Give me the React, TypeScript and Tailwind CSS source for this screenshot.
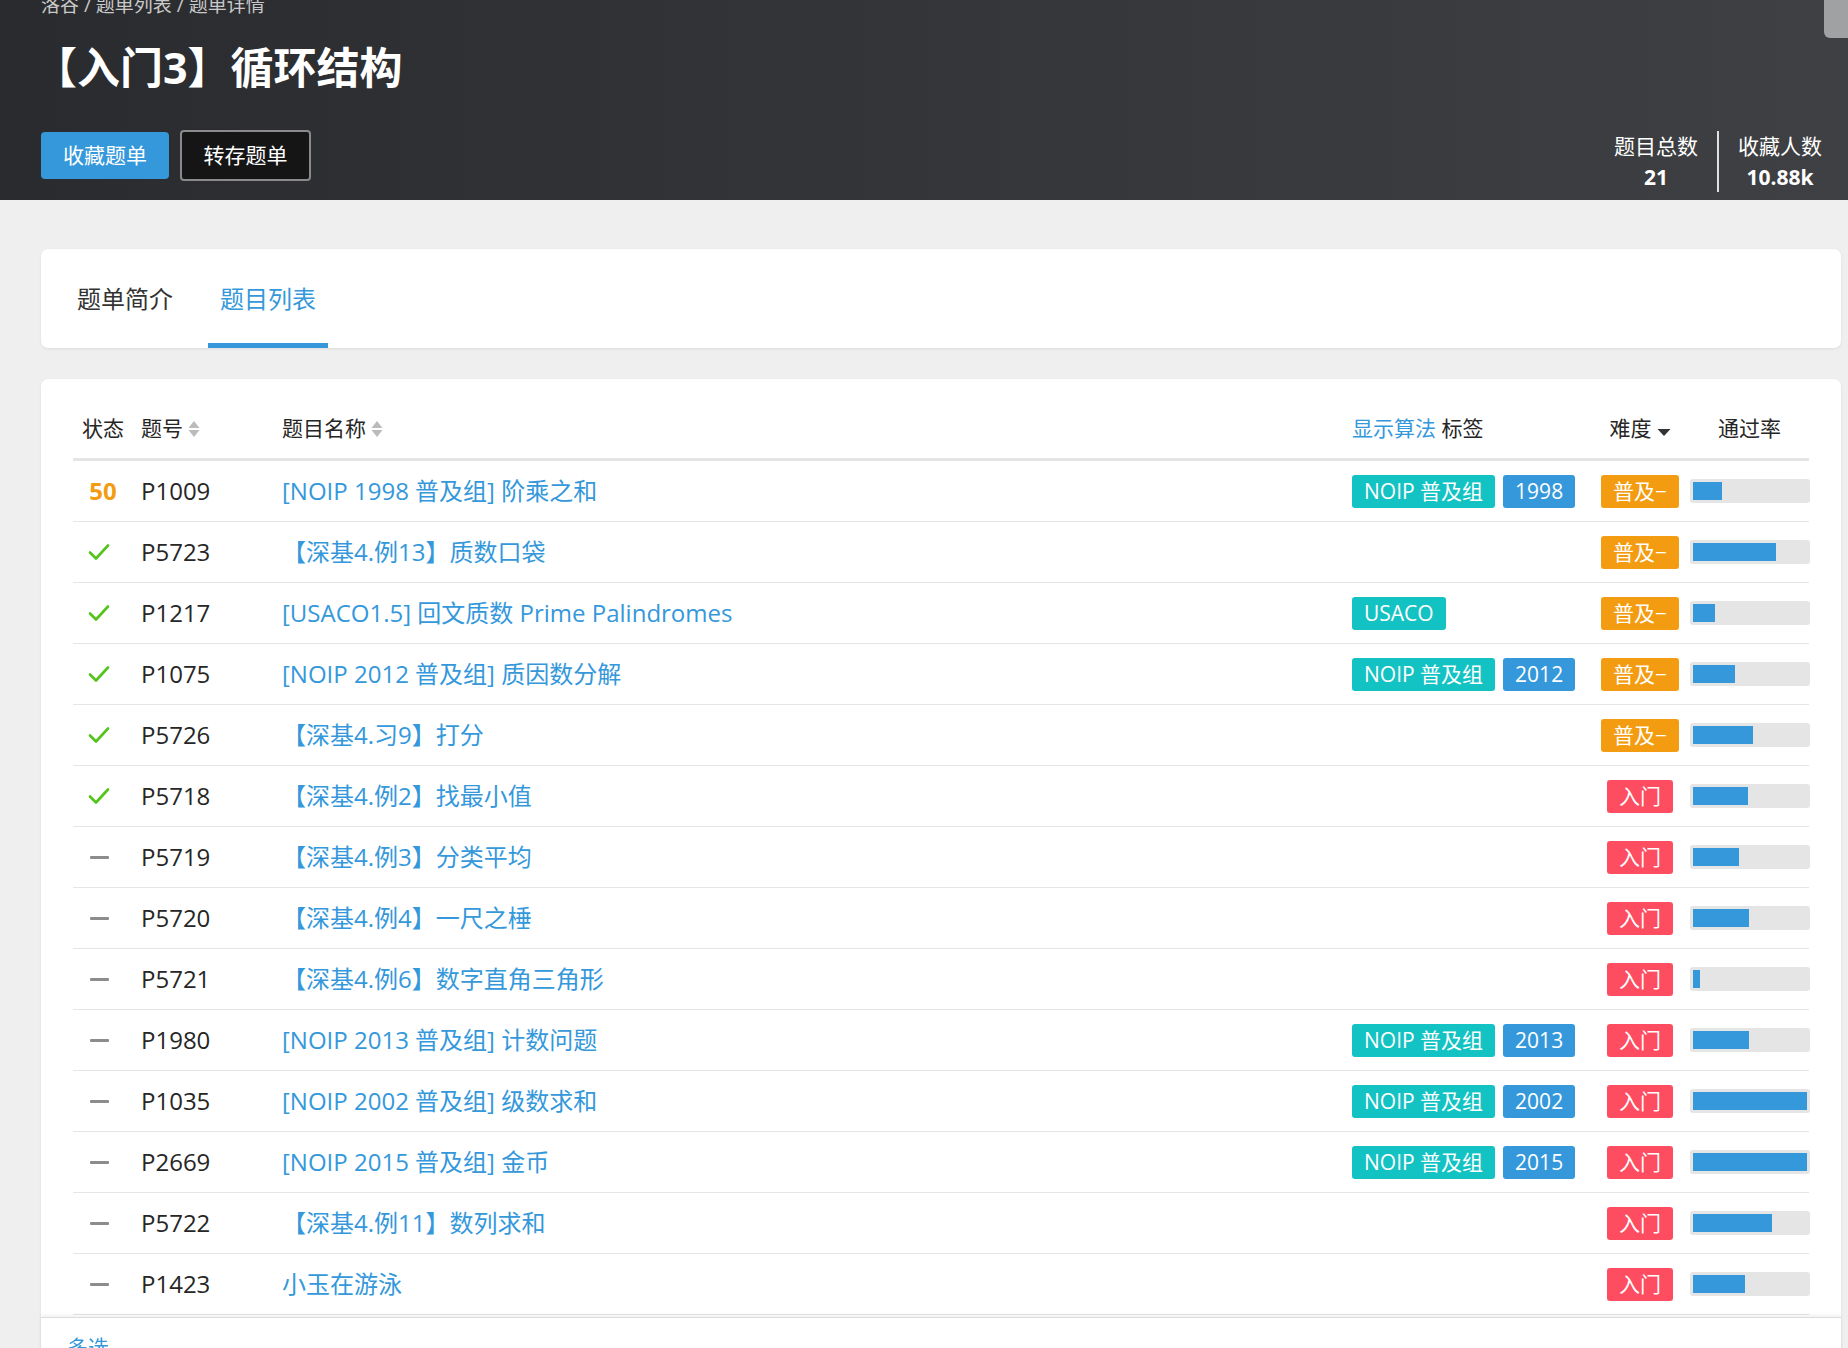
import React from "react";

type Row = {
  s: string;
  id: string;
  t: string;
  tags?: string[];
  d: "p" | "r";
  r: number;
};

const rows: Row[] = [
  { s: "50", id: "P1009", t: "[NOIP 1998 普及组] 阶乘之和", tags: ["NOIP 普及组", "1998"], d: "p", r: 25 },
  { s: "ok", id: "P5723", t: "【深基4.例13】质数口袋", d: "p", r: 73 },
  { s: "ok", id: "P1217", t: "[USACO1.5] 回文质数 Prime Palindromes", tags: ["USACO"], d: "p", r: 19 },
  { s: "ok", id: "P1075", t: "[NOIP 2012 普及组] 质因数分解", tags: ["NOIP 普及组", "2012"], d: "p", r: 37 },
  { s: "ok", id: "P5726", t: "【深基4.习9】打分", d: "p", r: 53 },
  { s: "ok", id: "P5718", t: "【深基4.例2】找最小值", d: "r", r: 48 },
  { s: "-", id: "P5719", t: "【深基4.例3】分类平均", d: "r", r: 40 },
  { s: "-", id: "P5720", t: "【深基4.例4】一尺之棰", d: "r", r: 49 },
  { s: "-", id: "P5721", t: "【深基4.例6】数字直角三角形", d: "r", r: 6 },
  { s: "-", id: "P1980", t: "[NOIP 2013 普及组] 计数问题", tags: ["NOIP 普及组", "2013"], d: "r", r: 49 },
  { s: "-", id: "P1035", t: "[NOIP 2002 普及组] 级数求和", tags: ["NOIP 普及组", "2002"], d: "r", r: 100 },
  { s: "-", id: "P2669", t: "[NOIP 2015 普及组] 金币", tags: ["NOIP 普及组", "2015"], d: "r", r: 100 },
  { s: "-", id: "P5722", t: "【深基4.例11】数列求和", d: "r", r: 69 },
  { s: "-", id: "P1423", t: "小玉在游泳", d: "r", r: 46 },
];

const font = { fontFamily: '"Open Sans", "Noto Sans CJK SC", sans-serif' };

function SortIcon() {
  return (
    <svg width="12" height="18" viewBox="0 0 12 18" className="ml-[5px]">
      <path d="M6 1 L11.5 8 H0.5 Z" fill="#bbbbbb" />
      <path d="M6 17 L11.5 10 H0.5 Z" fill="#bbbbbb" />
    </svg>
  );
}

function Caret() {
  return (
    <svg width="14" height="9" viewBox="0 0 14 9" className="ml-[5px] mt-[6px]">
      <path d="M0.5 1 H13.5 L7 8 Z" fill="#333333" />
    </svg>
  );
}

function Status({ s }: { s: string }) {
  if (s === "ok")
    return (
      <svg width="22" height="18" viewBox="0 0 22 18" className="mr-[8px]">
        <path d="M2 9.5 L8 15.5 L20 2.5" fill="none" stroke="#52c41a" strokeWidth="2.6" strokeLinecap="round" strokeLinejoin="round" />
      </svg>
    );
  if (s === "-") return <div className="w-[19px] h-[3px] bg-[#8c8c8c] rounded-[1px] mr-[8px]" />;
  return <span className="text-[24px] font-bold text-[#f39c11] leading-none">{s}</span>;
}

function Tag({ text }: { text: string }) {
  const isYear = /^\d+$/.test(text);
  return (
    <span
      className={
        "h-[33px] px-3 rounded-[3px] text-white text-[21px] leading-[33px] whitespace-nowrap " +
        (isYear ? "bg-[#3498db]" : "bg-[#13c2c2]")
      }
    >
      {text}
    </span>
  );
}

export default function App() {
  return (
    <div className="min-h-[1348px] bg-[#efefef] relative overflow-hidden" style={font}>
      {/* header */}
      <div className="h-[200px] bg-gradient-to-r from-[#2a2b2e] to-[#3f4043] overflow-hidden">
        <div className="w-[1800px] ml-[41px] flex flex-col">
          <div className="mt-[-10px] h-[30px] leading-[30px] text-[19px] text-[#c9c9c9]">
            洛谷 / 题单列表 / 题单详情
          </div>
          <h1 className="mt-[20px] -ml-[7px] h-[56px] leading-[56px] text-[43px] font-bold text-white">
            【入门3】循环结构
          </h1>
          <div className="mt-[35px] flex justify-between items-start">
            <div className="flex gap-[11px] mt-[1px]">
              <button className="w-[128px] h-[47px] rounded-[4px] bg-[#3498db] text-white text-[21px]">
                收藏题单
              </button>
              <button className="w-[131px] h-[51px] -mt-[2px] rounded-[4px] border-2 border-[#8a8a8a] bg-[#151516] text-white text-[21px]">
                转存题单
              </button>
            </div>
            <div className="flex text-white">
              <div className="px-[19px] flex flex-col items-center">
                <div className="text-[21px] leading-[31px]">题目总数</div>
                <div className="text-[21px] leading-[30px] font-bold">21</div>
              </div>
              <div className="w-[2px] bg-[#e0e0e0]" />
              <div className="px-[19px] flex flex-col items-center">
                <div className="text-[21px] leading-[31px]">收藏人数</div>
                <div className="text-[21px] leading-[30px] font-bold">10.88k</div>
              </div>
            </div>
          </div>
        </div>
      </div>

      {/* tabs card */}
      <div className="w-[1800px] ml-[41px] mt-[49px] h-[99px] bg-white rounded-[7px] shadow-[0_1px_3px_rgba(0,0,0,0.08)] flex px-6 gap-[23px]">
        <div className="h-full px-3 flex items-center border-y-[5px] border-transparent text-[24px] text-[#333333]">
          题单简介
        </div>
        <div className="h-full px-3 flex items-center border-y-[5px] border-t-transparent border-b-[#3498db] text-[24px] text-[#3498db]">
          题目列表
        </div>
      </div>

      {/* table card */}
      <div className="w-[1800px] ml-[41px] mt-[31px] bg-white rounded-t-[7px] shadow-[0_1px_3px_rgba(0,0,0,0.08)] px-8 pt-[25px]">
        <div className="grid grid-cols-[60px_141px_1070px_246px_100px_119px] h-[57px] pb-[4px] items-center border-b-[3px] border-[#e5e5e5] text-[21px] text-[#262626]">
          <div className="text-center">状态</div>
          <div className="pl-2 flex items-center">
            题号
            <SortIcon />
          </div>
          <div className="pl-2 flex items-center">
            题目名称
            <SortIcon />
          </div>
          <div className="pl-2">
            <span className="text-[#3498db]">显示算法</span> 标签
          </div>
          <div className="flex items-center justify-center">
            难度
            <Caret />
          </div>
          <div className="text-center">通过率</div>
        </div>
        {rows.map((r) => (
          <div
            key={r.id}
            className="grid grid-cols-[60px_141px_1070px_246px_100px_119px] h-[61px] items-center border-b border-[#e5e5e5]"
          >
            <div className="flex justify-center">
              <Status s={r.s} />
            </div>
            <div className="pl-2 text-[24px] text-[#262626]">{r.id}</div>
            <div className="pl-2 text-[24px] text-[#3498db] whitespace-nowrap">{r.t}</div>
            <div className="pl-2 flex gap-2">
              {(r.tags || []).map((t) => (
                <Tag key={t} text={t} />
              ))}
            </div>
            <div className="flex justify-center">
              <span
                className={
                  "h-[33px] px-3 rounded-[3px] text-white text-[21px] leading-[33px] " +
                  (r.d === "p" ? "bg-[#f39c11]" : "bg-[#fe4c61]")
                }
              >
                {r.d === "p" ? "普及−" : "入门"}
              </span>
            </div>
            <div className="h-[24px] bg-[#e5e5e5] rounded-[3px] p-[3px] -mr-[1px]">
              <div className="h-full bg-[#3498db]" style={{ width: `${r.r}%` }} />
            </div>
          </div>
        ))}
        <div className="h-[40px]" />
      </div>

      {/* sticky footer */}
      <div className="fixed top-[1317px] left-[41px] w-[1800px] h-[60px] bg-white border-t border-[#dddddd] shadow-[0_-2px_4px_rgba(0,0,0,0.06)] px-[26px] pt-[14px]">
        <span className="text-[21px] leading-[30px] text-[#3498db]">多选</span>
      </div>

      {/* overlay scrollbar thumb */}
      <div className="absolute top-0 right-0 w-[24px] h-[38px] bg-[#a0a1a3] rounded-bl-[6px]" />
    </div>
  );
}
